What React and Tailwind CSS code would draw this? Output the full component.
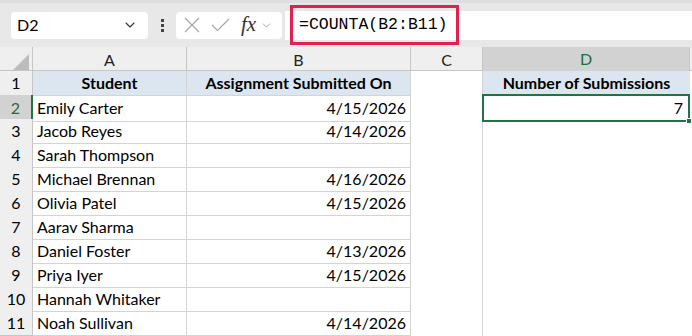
import React from 'react'
import { ChevronDown } from 'lucide-react'

const rows = [
  ['Emily Carter', '4/15/2026'],
  ['Jacob Reyes', '4/14/2026'],
  ['Sarah Thompson', ''],
  ['Michael Brennan', '4/16/2026'],
  ['Olivia Patel', '4/15/2026'],
  ['Aarav Sharma', ''],
  ['Daniel Foster', '4/13/2026'],
  ['Priya Iyer', '4/15/2026'],
  ['Hannah Whitaker', ''],
  ['Noah Sullivan', '4/14/2026'],
]

const cols = 'grid grid-cols-[33px_154px_224px_72px_207px_1fr]'

export default function App() {
  return (
    <div className="w-[692px] h-[336px] overflow-hidden bg-white text-[16px] text-black" style={{ fontFamily: 'Lato, "Liberation Sans", sans-serif' }}>
      {/* formula bar */}
      <div className="h-[47px] bg-[#e8e8e8] border-t-[3px] border-[#dedede] flex items-center pl-[11px]">
        <div className="w-[137px] h-[27px] bg-white rounded-[4px] flex items-center justify-between pl-[6px] pr-[10px]">
          <span className="text-[16px]">D2</span>
          <ChevronDown size={16} strokeWidth={1.6} className="text-[#333]" />
        </div>
        <div className="w-[28px] flex flex-col items-center gap-[2px]">
          <span className="w-[3px] h-[3px] bg-[#444]" />
          <span className="w-[3px] h-[3px] bg-[#444]" />
          <span className="w-[3px] h-[3px] bg-[#444]" />
        </div>
        <div className="w-[106px] h-[27px] bg-white rounded-[4px] flex items-center pl-[8px]">
          <svg width="16" height="16" viewBox="0 0 16 16" className="text-[#a6a6a6]">
            <path d="M1 1L15 15M15 1L1 15" stroke="currentColor" strokeWidth="1.2" fill="none" />
          </svg>
          <svg width="19" height="14" viewBox="0 0 19 14" className="text-[#a6a6a6] ml-[11px]">
            <path d="M1 7L6.5 12.5L18 1" stroke="currentColor" strokeWidth="1.2" fill="none" />
          </svg>
          <span className="italic text-[21px] text-[#333] leading-none -mt-[2px] ml-[11px]" style={{ fontFamily: '"Liberation Serif", serif' }}>fx</span>
          <ChevronDown size={13} strokeWidth={1.4} className="text-[#888] ml-[4px]" />
        </div>
        <div className="flex-1 h-[29px] bg-white ml-[3px] flex items-center relative">
          <div className="absolute left-[5px] top-[-6px] w-[169px] h-[40px] border-[3px] border-[#e0204f]" />
          <span className="pl-[14px] text-[16.5px]" style={{ fontFamily: '"Liberation Mono", monospace' }}>=COUNTA(B2:B11)</span>
        </div>
      </div>

      {/* column headers */}
      <div className={`${cols} h-[24px] bg-[#efefef] border-b border-[#c6c6c6] text-[#222]`}>
        <div className="relative border-r border-[#c6c6c6]">
          <div className="absolute right-[3px] bottom-[3px] w-0 h-0 border-l-[16px] border-l-transparent border-b-[16px] border-b-[#bcbcbc]" />
        </div>
        <div className="flex items-center justify-center border-r border-[#c6c6c6]">A</div>
        <div className="flex items-center justify-center border-r border-[#c6c6c6]">B</div>
        <div className="flex items-center justify-center border-r border-[#c6c6c6]">C</div>
        <div className="flex items-center justify-center bg-[#d2d2d2] text-[#1e6b41] border-b-2 border-[#217346] border-r border-r-[#c6c6c6]">D</div>
        <div />
      </div>

      {/* row 1 */}
      <div className={`${cols} h-[24px]`}>
        <div className="flex items-center justify-center bg-[#efefef] border-r border-b border-[#c6c6c6]">1</div>
        <div className="flex items-center justify-center bg-[#dce6f1] font-bold border-r border-b border-[#d4d4d4]">Student</div>
        <div className="flex items-center justify-center bg-[#dce6f1] font-bold border-r border-b border-[#d4d4d4] whitespace-nowrap">Assignment Submitted On</div>
        <div className="border-r border-[#d4d4d4]" />
        <div className="flex items-center justify-center bg-[#dce6f1] font-bold border-b border-[#d4d4d4] whitespace-nowrap">Number of Submissions</div>
        <div />
      </div>

      {rows.map(([name, date], i) => (
        <div key={i} className={`${cols} h-[24px]`}>
          {i === 0 ? (
            <div className="flex items-center justify-center bg-[#d2d2d2] text-[#1e6b41] border-r-2 border-r-[#217346] border-b border-b-[#c6c6c6]">{i + 2}</div>
          ) : (
            <div className="flex items-center justify-center bg-[#efefef] border-r border-b border-[#c6c6c6]">{i + 2}</div>
          )}
          <div className="flex items-center pl-[4px] border-r border-b border-[#d4d4d4] whitespace-nowrap">{name}</div>
          <div className="flex items-center justify-end pr-[4px] border-r border-b border-[#d4d4d4]">{date}</div>
          <div className="border-r border-[#d4d4d4]" />
          {i === 0 ? (
            <div className="relative flex items-center justify-end pr-[5px] border-2 border-[#217346] -mt-[1px] -ml-[1px]">
              7
              <span className="absolute -right-[4px] -bottom-[4px] w-[6px] h-[6px] bg-[#217346] border border-white" />
            </div>
          ) : (
            <div />
          )}
          <div />
        </div>
      ))}
    </div>
  )
}
